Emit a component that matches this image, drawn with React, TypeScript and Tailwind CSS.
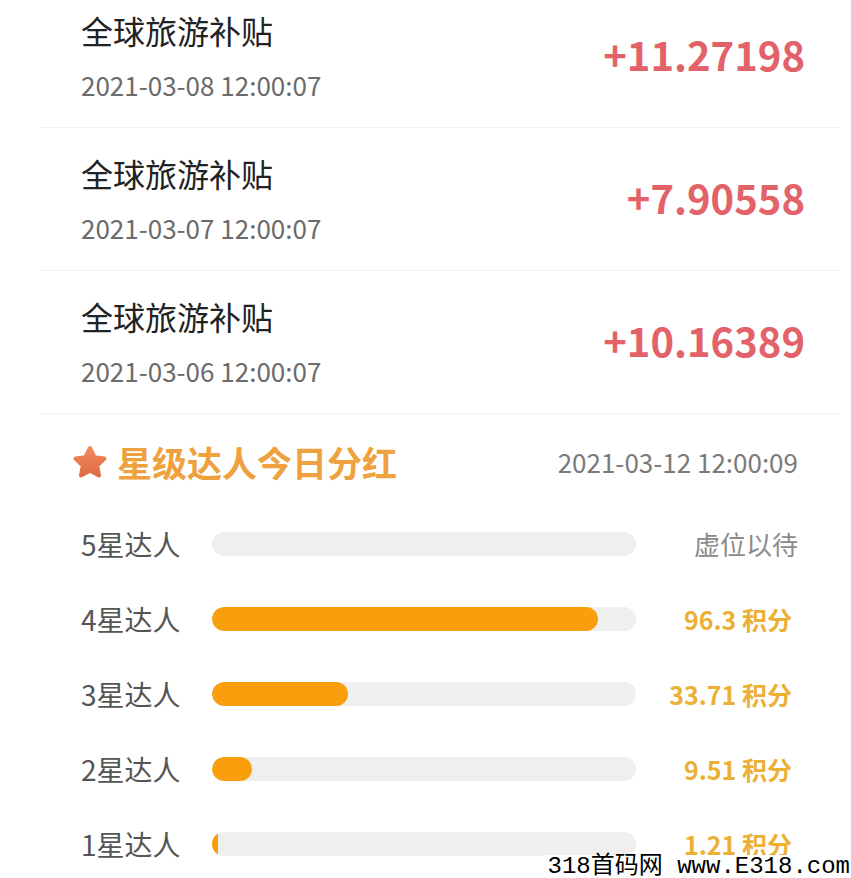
import React from "react";

const records = [
  { title: "全球旅游补贴", date: "2021-03-08 12:00:07", amount: "+11.27198" },
  { title: "全球旅游补贴", date: "2021-03-07 12:00:07", amount: "+7.90558" },
  { title: "全球旅游补贴", date: "2021-03-06 12:00:07", amount: "+10.16389" },
];

const levels = [
  { label: "5星达人", pct: 0, value: "虚位以待", empty: true },
  { label: "4星达人", pct: 91, value: "96.3 积分" },
  { label: "3星达人", pct: 32, value: "33.71 积分" },
  { label: "2星达人", pct: 9.4, value: "9.51 积分" },
  { label: "1星达人", pct: 1.5, value: "1.21 积分" },
];

function Star() {
  return (
    <svg width="38" height="36" viewBox="0 0 38 36">
      <defs>
        <linearGradient id="sg" x1="0" y1="0" x2="0" y2="1">
          <stop offset="0" stopColor="#f08a5a" />
          <stop offset="1" stopColor="#e06c45" />
        </linearGradient>
      </defs>
      <path
        d="M19 4 L23.6 13.2 L33.5 14.6 L26.3 21.6 L28 31.5 L19 26.8 L10 31.5 L11.7 21.6 L4.5 14.6 L14.4 13.2 Z"
        fill="url(#sg)"
        stroke="url(#sg)"
        strokeWidth="4"
        strokeLinejoin="round"
      />
    </svg>
  );
}

export default function App() {
  return (
    <div
      className="relative w-[851px] h-[878px] overflow-hidden bg-white"
      style={{ fontFamily: '"Noto Sans CJK SC", "Noto Sans", sans-serif' }}
    >
      <div className="ml-[40px] mr-[13px] mt-[-15px]">
        {records.map((r, i) => (
          <div
            key={i}
            className="flex h-[143px] items-start justify-between border-b border-[#f0f0f0] pl-[41px] pr-[33px]"
          >
            <div className="flex flex-col pt-[25px]">
              <div className="text-[32px] leading-[40px] text-[#222]">{r.title}</div>
              <div className="mt-[20px] text-[26px] leading-[30px] text-[#6b6b6b]">{r.date}</div>
            </div>
            <div className="pt-[41px] text-[40px] font-bold leading-[56px] text-[#e3626a]">
              {r.amount}
            </div>
          </div>
        ))}
      </div>

      <div className="mt-[28px] flex items-center justify-between pl-[71px] pr-[53px]">
        <div className="flex items-center gap-[8px]">
          <Star />
          <span className="text-[35px] font-bold leading-[40px] text-[#eea13c]">星级达人今日分红</span>
        </div>
        <span className="text-[26px] leading-[30px] text-[#7a7a7a]">2021-03-12 12:00:09</span>
      </div>

      <div className="mt-[50px] flex flex-col gap-[51px] pl-[81px] pr-[53px]">
        {levels.map((l, i) => (
          <div key={i} className="flex h-[24px] items-center">
            <span className="w-[131px] text-[28px] leading-[24px] text-[#555]">{l.label}</span>
            <div className="relative h-[24px] w-[424px] overflow-hidden rounded-full bg-[#efefef]">
              {l.pct > 0 && (
                <div
                  className="h-full rounded-full bg-[#f99f0e]"
                  style={{ width: `${Math.max(l.pct, 1.5)}%` }}
                />
              )}
            </div>
            <span
              className={
                l.empty
                  ? "ml-auto text-[26px] leading-[24px] text-[#8a8a8a]"
                  : "ml-auto mr-[6px] text-[25px] font-bold leading-[24px] text-[#ebb034]"
              }
            >
              {l.value}
            </span>
          </div>
        ))}
      </div>

      <div
        className="absolute bottom-0 right-0 h-[23px] bg-white pl-[4px] pr-[1px] text-[24px] leading-[23px] text-black"
        style={{ fontFamily: '"Liberation Mono", "Noto Sans CJK SC", monospace' }}
      >
        318首码网 www.E318.com
      </div>
    </div>
  );
}
